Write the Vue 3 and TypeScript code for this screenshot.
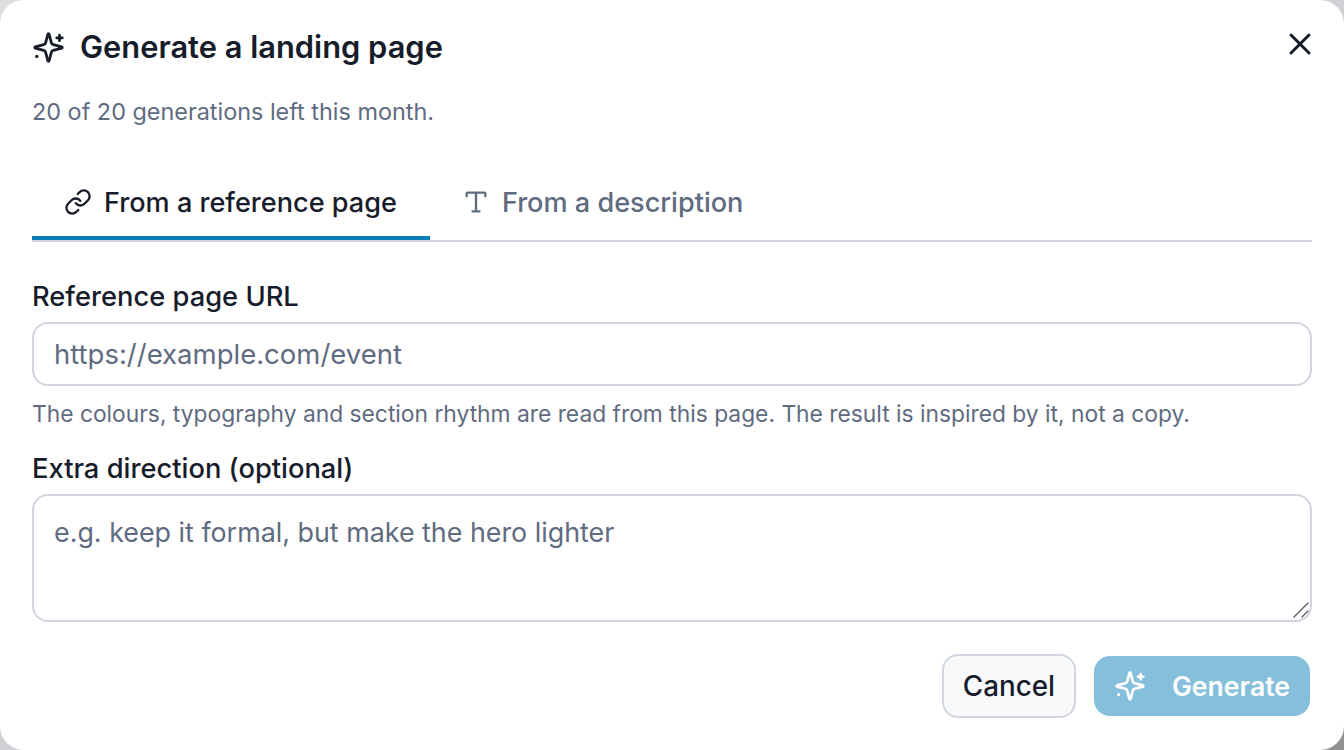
<script setup lang="ts">
const title = 'Generate a landing page'
</script>

<template>
  <div class="backdrop">
    <section class="dialog">
      <header class="head">
        <h2 class="title">
          <svg class="ico-title" viewBox="0 0 24 24" fill="none" stroke="currentColor" stroke-width="2" stroke-linecap="round" stroke-linejoin="round">
            <path d="M9.937 15.5A2 2 0 0 0 8.5 14.063l-6.135-1.582a.5.5 0 0 1 0-.962L8.5 9.936A2 2 0 0 0 9.937 8.5l1.582-6.135a.5.5 0 0 1 .963 0L14.063 8.5A2 2 0 0 0 15.5 9.937l6.135 1.581a.5.5 0 0 1 0 .964L15.5 14.063a2 2 0 0 0-1.437 1.437l-1.582 6.135a.5.5 0 0 1-.963 0z" />
            <path d="M20 3v4M22 5h-4" />
            <circle cx="3.5" cy="18.5" r="1.2" fill="currentColor" stroke="none" />
          </svg>
          {{ title }}
        </h2>
        <button class="close" aria-label="Close">
          <svg viewBox="0 0 24 24" fill="none" stroke="currentColor" stroke-width="2" stroke-linecap="round" stroke-linejoin="round">
            <path d="M18 6 6 18M6 6l12 12" />
          </svg>
        </button>
      </header>
      <p class="sub">20 of 20 generations left this month.</p>

      <div class="tabs">
        <button class="tab active">
          <svg viewBox="0 0 24 24" fill="none" stroke="currentColor" stroke-width="2" stroke-linecap="round" stroke-linejoin="round">
            <path d="M10 13a5 5 0 0 0 7.54.54l3-3a5 5 0 0 0-7.07-7.07l-1.72 1.71" />
            <path d="M14 11a5 5 0 0 0-7.54-.54l-3 3a5 5 0 0 0 7.07 7.07l1.71-1.71" />
          </svg>
          From a reference page
        </button>
        <button class="tab">
          <svg viewBox="0 0 24 24" fill="none" stroke="currentColor" stroke-width="2" stroke-linecap="round" stroke-linejoin="round">
            <path d="M12 4v16M4 7V5a1 1 0 0 1 1-1h14a1 1 0 0 1 1 1v2M9 20h6" />
          </svg>
          From a description
        </button>
      </div>

      <label class="label" for="ref-url">Reference page URL</label>
      <input id="ref-url" class="field url" type="text" placeholder="https://example.com/event" />
      <p class="hint">The colours, typography and section rhythm are read from this page. The result is inspired by it, not a copy.</p>

      <label class="label second" for="extra">Extra direction (optional)</label>
      <div class="area-wrap">
        <textarea id="extra" class="field area" placeholder="e.g. keep it formal, but make the hero lighter"></textarea>
        <svg class="grip" viewBox="0 0 16 16" fill="none" stroke="#5a5a5e" stroke-width="1.3" stroke-linecap="round">
          <path d="M1 15 15 1M9 15l6-6" />
        </svg>
      </div>

      <footer class="actions">
        <button class="btn cancel">Cancel</button>
        <button class="btn generate">
          <svg viewBox="0 0 24 24" fill="none" stroke="currentColor" stroke-width="2" stroke-linecap="round" stroke-linejoin="round">
            <path d="M9.937 15.5A2 2 0 0 0 8.5 14.063l-6.135-1.582a.5.5 0 0 1 0-.962L8.5 9.936A2 2 0 0 0 9.937 8.5l1.582-6.135a.5.5 0 0 1 .963 0L14.063 8.5A2 2 0 0 0 15.5 9.937l6.135 1.581a.5.5 0 0 1 0 .964L15.5 14.063a2 2 0 0 0-1.437 1.437l-1.582 6.135a.5.5 0 0 1-.963 0z" />
            <path d="M20 3v4M22 5h-4" />
            <circle cx="3.5" cy="18.5" r="1.2" fill="currentColor" stroke="none" />
          </svg>
          Generate
        </button>
      </footer>
    </section>
  </div>
</template>

<style>
html, body { margin: 0; padding: 0; }
</style>

<style scoped>
.backdrop {
  width: 1344px;
  height: 750px;
  background: linear-gradient(to bottom right, #dedee0, #cfd1d4 50%, #909092);
  overflow: hidden;
}
.dialog {
  box-sizing: border-box;
  width: 1344px;
  height: 750px;
  background: #fff;
  border-radius: 24px;
  padding: 24px 32px 0;
  display: flex;
  flex-direction: column;
  font-family: Inter, "Liberation Sans", sans-serif;
  color: #171c2b;
}
.head {
  display: flex;
  align-items: flex-start;
  justify-content: space-between;
  height: 46px;
}
.title {
  margin: 0;
  display: flex;
  align-items: center;
  gap: 15px;
  font-size: 30.85px;
  line-height: 46px;
  font-weight: 600;
}
.ico-title { width: 33px; height: 33px; }
.close {
  border: 0;
  background: none;
  padding: 0;
  color: inherit;
  width: 36px;
  height: 36px;
  margin: 2px -6px 0 0;
}
.close svg { width: 36px; height: 36px; display: block; }
.sub {
  margin: 27px 0 0;
  font-size: 23.4px;
  line-height: 30px;
  color: #5f6b80;
}
.tabs {
  display: flex;
  margin-top: 41px;
  border-bottom: 2px solid #d0d5e0;
}
.tab {
  display: flex;
  align-items: center;
  gap: 12px;
  border: 0;
  background: none;
  font: inherit;
  font-size: 27.1px;
  font-weight: 500;
  color: #5f6b80;
  padding: 0 33px 0 32px;
  height: 72px;
  box-sizing: border-box;
  border-bottom: 4px solid transparent;
}
.tab svg { width: 28px; height: 28px; }
.tab.active { color: #171c2b; border-bottom-color: #0a7fb5; }
.label {
  display: block;
  margin-top: 37px;
  font-size: 27.3px;
  line-height: 36px;
  font-weight: 500;
}
.label.second { margin-top: 22px; }
.field {
  box-sizing: border-box;
  display: block;
  width: 100%;
  height: 64px;
  padding: 0 20px;
  border: 2px solid #d0d5e0;
  border-radius: 16px;
  background: #fff;
  font: inherit;
  color: #171c2b;
  outline: none;
}
.url {
  margin-top: 7px;
  font-size: 27.5px;
}
.field::placeholder { color: #5f6b80; opacity: 1; }
.area-wrap {
  position: relative;
  margin-top: 7px;
}
.area {
  height: 128px;
  padding: 19px 20px;
  font-size: 26.85px;
  line-height: 34px;
  resize: none;
}
.grip {
  position: absolute;
  right: 3px;
  bottom: 4px;
  width: 16px;
  height: 16px;
  pointer-events: none;
}
.hint {
  margin: 13px 0 0;
  font-size: 22.8px;
  line-height: 30px;
  color: #5f6b80;
}
.actions {
  display: flex;
  justify-content: flex-end;
  align-items: center;
  gap: 18px;
  margin-top: 32px;
  padding-right: 2px;
}
.btn {
  display: inline-flex;
  align-items: center;
  justify-content: center;
  font: inherit;
  font-weight: 500;
  border-radius: 16px;
  box-sizing: border-box;
}
.cancel {
  width: 134px;
  height: 64px;
  font-size: 27.8px;
  background: #f8f9fb;
  border: 2px solid #d0d5e0;
  color: #171c2b;
}
.generate {
  width: 216px;
  height: 60px;
  gap: 26px;
  font-size: 26.6px;
  font-weight: 600;
  border: 0;
  background: #85bfdb;
  color: #fff;
}
.generate svg { width: 32px; height: 32px; }
</style>
